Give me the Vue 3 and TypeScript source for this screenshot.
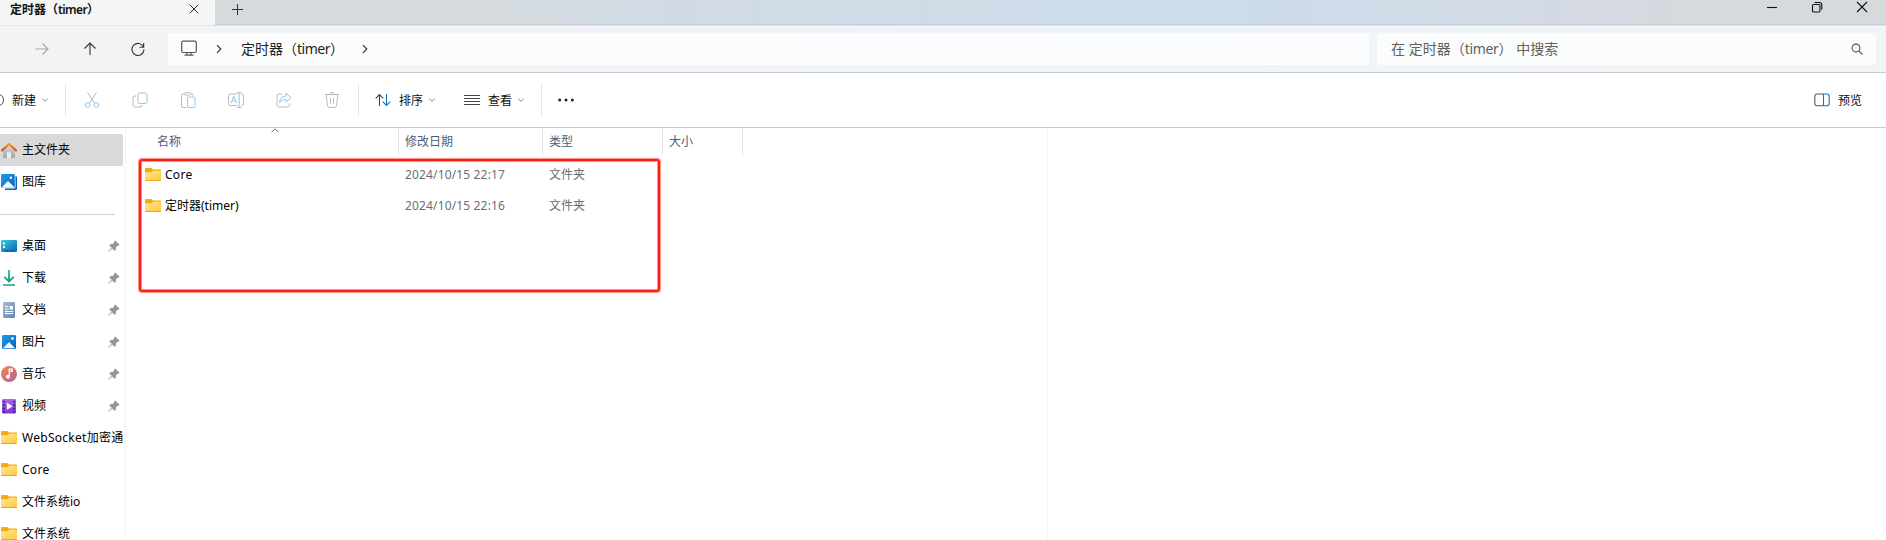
<script setup lang="ts">
type IconName = 'home' | 'gallery' | 'desktop' | 'download' | 'document' | 'picture' | 'music' | 'video' | 'folder'

interface Place {
  label: string
  icon: IconName
  pinned?: boolean
  active?: boolean
  latin?: boolean
}

interface Entry {
  name: string
  modified: string
  kind: string
}

const topPlaces: Place[] = [
  { label: '主文件夹', icon: 'home', active: true },
  { label: '图库', icon: 'gallery' },
]

const places: Place[] = [
  { label: '桌面', icon: 'desktop', pinned: true },
  { label: '下载', icon: 'download', pinned: true },
  { label: '文档', icon: 'document', pinned: true },
  { label: '图片', icon: 'picture', pinned: true },
  { label: '音乐', icon: 'music', pinned: true },
  { label: '视频', icon: 'video', pinned: true },
  { label: 'WebSocket加密通', icon: 'folder', latin: true },
  { label: 'Core', icon: 'folder', latin: true },
  { label: '文件系统io', icon: 'folder' },
  { label: '文件系统', icon: 'folder' },
]

const entries: Entry[] = [
  { name: 'Core', modified: '2024/10/15 22:17', kind: '文件夹' },
  { name: '定时器(timer)', modified: '2024/10/15 22:16', kind: '文件夹' },
]
</script>

<template>
  <div class="window">
    <svg class="defs" width="0" height="0" aria-hidden="true">
      <defs>
        <linearGradient id="gFolder" x1="0" y1="0" x2="1" y2="1"><stop offset="0" stop-color="#ffe69a" /><stop offset="1" stop-color="#ffc937" /></linearGradient>
        <linearGradient id="gBlue" x1="0" y1="0" x2="1" y2="1"><stop offset="0" stop-color="#1ba0ea" /><stop offset="1" stop-color="#0a62bd" /></linearGradient>
        <linearGradient id="gDesk" x1="0" y1="0" x2="1" y2="1"><stop offset="0" stop-color="#2fd0e0" /><stop offset="1" stop-color="#0c62b8" /></linearGradient>
        <linearGradient id="gDoc" x1="0" y1="0" x2="1" y2="1"><stop offset="0" stop-color="#a9bdd3" /><stop offset="1" stop-color="#6684a8" /></linearGradient>
        <linearGradient id="gMusic" x1="0" y1="0" x2="1" y2="1"><stop offset="0" stop-color="#f58b4c" /><stop offset="1" stop-color="#b45ba6" /></linearGradient>
        <linearGradient id="gVideo" x1="0" y1="0" x2="0" y2="1"><stop offset="0" stop-color="#a967ee" /><stop offset="1" stop-color="#7d35d6" /></linearGradient>
        <linearGradient id="gDown" gradientUnits="userSpaceOnUse" x1="0" y1="0" x2="0" y2="12"><stop offset="0" stop-color="#27c98a" /><stop offset="1" stop-color="#129a86" /></linearGradient>
        <linearGradient id="gRoof" x1="0" y1="0" x2="0" y2="1"><stop offset="0" stop-color="#f59b25" /><stop offset="1" stop-color="#d8501d" /></linearGradient>
        <linearGradient id="gWall" x1="0" y1="0" x2="0" y2="1"><stop offset="0" stop-color="#dedede" /><stop offset="1" stop-color="#a5a5a5" /></linearGradient>

        <symbol id="home" viewBox="0 0 16 16">
          <path d="M2 7.500 8 2.200l6 5.300V15a.9.9 0 0 1-.9.900H10V10.500H6v5.400H2.900A.9.9 0 0 1 2 15z" fill="url(#gWall)" />
          <path d="M6 10.500h4v5.400H6z" fill="#ededed" />
          <path d="M1 8.400 8 2l7 6.400" fill="none" stroke="url(#gRoof)" stroke-width="2.200" stroke-linecap="round" stroke-linejoin="round" />
        </symbol>
        <symbol id="gallery" viewBox="0 0 16 16">
          <path d="M4 2h10.500A1.500 1.500 0 0 1 16 3.500v11a1.500 1.500 0 0 1-1.500 1.500H4z" fill="#0d5fb4" />
          <rect x="0" y="0" width="14.500" height="14.500" rx="1.500" fill="#fff" />
          <rect x="0" y="0" width="13.800" height="13.800" rx="1.300" fill="url(#gBlue)" />
          <path d="M1 13 7 7l6.200 6-.5.8H1.500z" fill="#f2f8ff" />
          <circle cx="9.800" cy="3.700" r="1.200" fill="#fff" />
        </symbol>
        <symbol id="desktop" viewBox="0 0 16 16">
          <rect x="0" y="2" width="16" height="12" rx="1.200" fill="url(#gDesk)" />
          <path d="M2 4.500h2v2H2zM2 8h2v2H2z" fill="#e4fcff" />
          <path d="M3 12.800h10" stroke="#0a3a70" stroke-width="1" stroke-dasharray="1.500 1" />
        </symbol>
        <symbol id="download" viewBox="0 0 16 16">
          <path d="M8 0v11M3.300 6.800 8 11.500l4.700-4.700" fill="none" stroke="url(#gDown)" stroke-width="1.900" />
          <path d="M2 15h12" stroke="#16a085" stroke-width="1.600" />
        </symbol>
        <symbol id="document" viewBox="0 0 16 16">
          <rect x="2" y="0" width="12" height="16" rx="1.200" fill="url(#gDoc)" />
          <path d="M4 4.500h3.500M4 7h3.500M4 9.500h8M4 11.500h8" stroke="#fff" stroke-width="1.100" />
          <path d="M8.700 4h3.300v3.400H8.700z" fill="#fff" />
        </symbol>
        <symbol id="picture" viewBox="0 0 16 16">
          <rect x="1" y="1" width="14" height="14" rx="1.300" fill="url(#gBlue)" />
          <path d="M2 14.300 8 8l6 6.300z" fill="#f4faff" />
          <circle cx="11.500" cy="4.500" r="1.300" fill="#fff" />
        </symbol>
        <symbol id="music" viewBox="0 0 16 16">
          <circle cx="8" cy="8" r="8" fill="url(#gMusic)" />
          <path d="M8.300 10.500V3.200h2.900v2.200H9.300" fill="none" stroke="#fff" stroke-width="1.300" />
          <circle cx="7" cy="10.700" r="2" fill="#fff" />
        </symbol>
        <symbol id="video" viewBox="0 0 16 16">
          <rect x="1" y="1" width="14" height="14.500" rx="1.300" fill="url(#gVideo)" />
          <path d="M3 2.800v12M13 2.800v12" stroke="#3c176f" stroke-width="1.600" stroke-dasharray="1.600 1.900" />
          <path d="M5.800 4.500v7.600L11.600 8.300z" fill="#fff" />
        </symbol>
        <symbol id="folder" viewBox="0 0 16 16">
          <path d="M0 1.700A.7.700 0 0 1 .7 1h5.800l1.500 1.500h7.300a.7.700 0 0 1 .7.700V8H0z" fill="#f0ad10" />
          <path d="M0 5.200h6.300l1.500-1.400H16v9a.9.900 0 0 1-.9.900H.9a.9.900 0 0 1-.9-.9z" fill="url(#gFolder)" />
          <path d="M.4 13.500h15.200" stroke="#e5a31a" stroke-width=".9" />
        </symbol>
        <symbol id="pin" viewBox="0 0 12 12">
          <path d="M7.300.7 11.300 4.700 10.300 5.700 9.800 5.500 7.800 7.500 7.700 9.700 6.700 10.700 4.200 8.200 1 11.400.5 11.500.6 11 3.800 7.800 1.300 5.300 2.300 4.300 4.500 4.200 6.500 2.200 6.300 1.700z" fill="#8d989f" stroke="#8d989f" stroke-width=".3" />
        </symbol>
        <symbol id="chev" viewBox="0 0 8 8"><path d="M1.300 2.700 4 5.300 6.700 2.700" fill="none" stroke="#8c8c8c" stroke-width="1" /></symbol>
        <symbol id="crumb" viewBox="0 0 8 10"><path d="M2 1.200 5.800 5 2 8.800" fill="none" stroke="#333" stroke-width="1.200" /></symbol>
      </defs>
    </svg>

    <header class="titlebar">
      <div class="tab">
        <span class="tab-title">定时器（<span class="tight">timer</span>）</span>
        <svg class="tab-close" viewBox="0 0 10 10"><path d="M.7.7 9.300 9.300M9.300.7.7 9.300" /></svg>
      </div>
      <svg class="tab-add" viewBox="0 0 11 11"><path d="M5.500 0v11M0 5.500h11" /></svg>
      <div class="win-buttons">
        <svg viewBox="0 0 12 12"><path d="M1 6.500h10" /></svg>
        <svg viewBox="0 0 12 12"><rect x="1.500" y="3.500" width="7.500" height="7.500" rx="1.200" /><path d="M3.500 1.500h5A2.300 2.300 0 0 1 10.800 3.800v5" /></svg>
        <svg viewBox="0 0 12 12"><path d="M1 1l10 10M11 1 1 11" /></svg>
      </div>
    </header>

    <nav class="navbar">
      <div class="nav-buttons">
        <svg viewBox="0 0 14 14" class="dim"><path d="M.5 7h12.500M7.500 1.500 13 7l-5.500 5.500" /></svg>
        <svg viewBox="0 0 14 14"><path d="M7 13V1M1.500 6.500 7 1l5.500 5.500" /></svg>
        <svg viewBox="0 0 14 14"><path d="M12.500 5A6 6 0 1 0 13 7.500M12.700 1v4.200H8.500" /></svg>
      </div>
      <div class="address">
        <svg class="monitor" viewBox="0 0 16 16"><rect x=".7" y="1.200" width="14.600" height="11.300" rx="1.500" /><path d="M6 12.500v2.700M10 12.500v2.700M3.500 15.200h9" /></svg>
        <svg class="crumb first"><use href="#crumb" /></svg>
        <span class="path">定时器（<span class="tight">timer</span>）</span>
        <svg class="crumb"><use href="#crumb" /></svg>
      </div>
      <div class="search">
        <span>在 定时器（<span class="tight">timer</span>） 中搜索</span>
        <svg viewBox="0 0 12 12"><circle cx="5" cy="5" r="3.900" /><path d="M7.800 7.800 11.500 11.500" /></svg>
      </div>
    </nav>

    <div class="toolbar">
      <div class="new">
        <svg class="new-ring" viewBox="0 0 4 14"><path d="M0 1.500a6 6 0 0 1 0 11" /></svg>
        <span>新建</span>
        <svg class="chev"><use href="#chev" /></svg>
      </div>
      <i class="sep"></i>
      <div class="actions">
        <svg viewBox="0 0 16 16"><path class="g" d="M3.500.5 10.500 11.200M12.500.5 5.500 11.200" /><circle class="b" cx="3.600" cy="13" r="2.400" /><circle class="b" cx="12.400" cy="13" r="2.400" /></svg>
        <svg viewBox="0 0 16 16"><path class="g" d="M4 4H3a2 2 0 0 0-2 2v7a2 2 0 0 0 2 2h5a2 2 0 0 0 2-2" /><rect class="b" x="6" y="1" width="9" height="10.500" rx="1.800" /></svg>
        <svg viewBox="0 0 16 16"><path class="g" d="M4.500 2H3a1.500 1.500 0 0 0-1.500 1.500v10.500A1.500 1.500 0 0 0 3 15.500h3.500M10.500 2H12a1.200 1.200 0 0 1 1.200 1.500" /><rect class="g" x="4.500" y=".6" width="6" height="2.500" rx="1" /><rect class="b" x="7.500" y="5" width="7.500" height="10.500" rx="1.200" /></svg>
        <svg viewBox="0 0 16 16"><path class="g" d="M9.500 2H2.500a2 2 0 0 0-2 2v7.500a2 2 0 0 0 2 2h7M13 2h.5a2 2 0 0 1 2 2v7.500a2 2 0 0 1-2 2H13" /><path class="b" d="M9 .5h4.500M11.200.5v15M9 15.500h4.500M3 11.200 5.700 4.300 8.400 11.200M4 9h3.400" /></svg>
        <svg viewBox="0 0 16 16"><path class="g" d="M6 2H3a2 2 0 0 0-2 2v9a2 2 0 0 0 2 2h8.500a2 2 0 0 0 2-2v-1.500" /><path class="b" d="M10 1.200 15 5.700l-5 4.500V7.700C7 7.600 5 8.500 3.500 10.700 3.800 6.500 6 4.200 10 3.900z" /></svg>
        <svg viewBox="0 0 16 16"><path class="g" d="M1 2.500h14M6 2.300a2 2 0 0 1 4 0M2.300 2.700 3.500 13.600a2 2 0 0 0 2 1.900h5a2 2 0 0 0 2-1.900L13.700 2.700M6.500 6v5.800M9.500 6v5.800" /></svg>
      </div>
      <i class="sep"></i>
      <div class="menu sort">
        <svg class="menu-icon" viewBox="0 0 16 14"><path d="M4.500 13V1.500M.7 5.300 4.500 1.500l3.800 3.800" stroke="#444" /><path d="M11.500 1v11.500M7.700 8.700l3.800 3.800 3.800-3.800" stroke="#0078d4" /></svg>
        <span>排序</span>
        <svg class="chev"><use href="#chev" /></svg>
      </div>
      <div class="menu view">
        <svg class="menu-icon" viewBox="0 0 16 14"><path d="M0 2.500h16M0 5.500h16M0 8.500h16M0 11.500h16" stroke="#444" /></svg>
        <span>查看</span>
        <svg class="chev"><use href="#chev" /></svg>
      </div>
      <i class="sep"></i>
      <svg class="dots" viewBox="0 0 16 4"><circle cx="1.700" cy="2" r="1.500" /><circle cx="8" cy="2" r="1.500" /><circle cx="14.300" cy="2" r="1.500" /></svg>
      <div class="preview">
        <svg viewBox="0 0 16 14"><path d="M9 1H3a2.200 2.200 0 0 0-2.200 2.200v7.300A2.200 2.200 0 0 0 3 12.700h6" stroke="#555" /><path d="M9.500 1H13a2.200 2.200 0 0 1 2.200 2.200v7.300a2.200 2.200 0 0 1-2.200 2.200H9.500z" stroke="#0078d4" /></svg>
        <span>预览</span>
      </div>
    </div>

    <main class="body">
      <aside class="sidebar">
        <div v-for="p in topPlaces" :key="p.label" class="place" :class="{ active: p.active }">
          <svg class="icon"><use :href="'#' + p.icon" /></svg>
          <span class="label">{{ p.label }}</span>
        </div>
        <div class="divider"></div>
        <div v-for="p in places" :key="p.label" class="place">
          <svg class="icon"><use :href="'#' + p.icon" /></svg>
          <span class="label" :class="{ latin: p.latin }">{{ p.label }}</span>
          <svg v-if="p.pinned" class="pin"><use href="#pin" /></svg>
        </div>
      </aside>

      <section class="files">
        <div class="columns">
          <div class="col name">名称<svg class="sort-mark" viewBox="0 0 8 5"><path d="M.5 4.300 4 .8l3.500 3.500" /></svg></div>
          <div class="col date">修改日期</div>
          <div class="col type">类型</div>
          <div class="col size">大小</div>
        </div>
        <div v-for="e in entries" :key="e.name" class="entry">
          <svg class="icon"><use href="#folder" /></svg>
          <span class="entry-name">{{ e.name }}</span>
          <span class="entry-date">{{ e.modified }}</span>
          <span class="entry-kind">{{ e.kind }}</span>
        </div>
        <div class="marker"></div>
      </section>
      <section class="preview-pane"></section>
    </main>
  </div>
</template>

<style>
body { margin: 0; background: #fff; overflow: hidden; }
</style>

<style scoped>
.window {
  width: 1886px;
  height: 540px;
  overflow: hidden;
  display: flex;
  flex-direction: column;
  background: #fff;
  color: #111;
  font: 12px/16px "Noto Sans", "Noto Sans CJK SC", sans-serif;
}
.window * { box-sizing: border-box; }
.defs { position: absolute; }
svg { flex: none; display: block; }
span { white-space: nowrap; }

.titlebar {
  height: 25px;
  flex: none;
  display: flex;
  border-bottom: 1px solid #c4ced8;
  background: linear-gradient(90deg, #d5dadd 0, #d5dadc 440px, #d2dae4 640px, #cedce8 980px, #cbdceb 1180px, #d0dbe7 1420px, #d5d9e2 1610px, #d6dadc 1700px);
}
.tab {
  width: 215px;
  height: 25px;
  padding-left: 10px;
  display: flex;
  background: #f4f5f5;
}
.tab-title { width: 179px; padding-top: 2px; font-weight: 600; font-size: 12px; }
.tab-title .tight { letter-spacing: -.6px; }
.tab-close { width: 10px; height: 10px; margin-top: 4px; }
.tab-close path, .tab-add path { fill: none; stroke: #333; stroke-width: 1; }
.tab-add { width: 11px; height: 11px; margin: 4px 0 0 17px; }
.win-buttons { display: flex; gap: 33px; margin: 1px 18px 0 auto; }
.win-buttons svg { width: 12px; height: 12px; fill: none; stroke: #111; stroke-width: 1.100; }

.navbar {
  height: 48px;
  flex: none;
  display: flex;
  padding: 7px 10px 0 35px;
  border-top: 1px solid #e3e6e9;
  border-bottom: 1px solid #c3cad1;
  background: linear-gradient(90deg, #f2f3f4 0, #f2f3f6 600px, #eff4f9 1150px, #f1f3f7 1550px, #f2f3f4 1700px);
}
.nav-buttons { width: 133px; display: flex; gap: 34px; padding-top: 9px; }
.nav-buttons svg { width: 14px; height: 14px; fill: none; stroke: #333; stroke-width: 1.100; }
.nav-buttons .dim { stroke: #a5a5a5; }
.address, .search { height: 32px; border-radius: 4px; display: flex; background: #fbfdfd; }
.address { width: 1201px; padding-left: 13px; background: linear-gradient(90deg, #fbfdfc, #fbfcfe 800px); }
.address .tight { letter-spacing: -.5px; }
.monitor { width: 16px; height: 16px; margin-top: 7px; fill: none; stroke: #555; stroke-width: 1.200; }
.crumb { width: 8px; height: 10px; margin-top: 11px; }
.crumb.first { margin-left: 18px; }
.path { width: 106px; margin-left: 18px; font-size: 14px; line-height: 32px; color: #222; }
.path + .crumb { margin-left: 14px; }
.search { width: 499px; margin-left: 8px; padding: 0 13px 0 14px; justify-content: space-between; color: #606060; font-size: 14px; line-height: 32px; }
.search .tight { letter-spacing: -.3px; }
.search svg { width: 12px; height: 12px; margin-top: 10px; fill: none; stroke: #555; stroke-width: 1.100; }

.toolbar {
  height: 55px;
  flex: none;
  display: flex;
  align-items: center;
  border-bottom: 1px solid #c3cad1;
}
.toolbar span { padding-top: 2px; }
.new { width: 65px; display: flex; align-items: center; }
.new-ring { width: 4px; height: 14px; fill: none; stroke: #555; }
.new span { width: 25px; margin-left: 8px; }
.chev { width: 8px; height: 8px; }
.new .chev { margin-left: 4px; }
.sep { width: 1px; height: 32px; background: #e3e3e3; }
.actions { width: 292px; display: flex; gap: 32px; padding-left: 18px; }
.actions svg { width: 16px; height: 16px; fill: none; stroke-width: 1; }
.g { stroke: #bababa; }
.b { stroke: #92c6ee; }
.menu { display: flex; align-items: center; }
.menu-icon { width: 16px; height: 14px; fill: none; stroke-width: 1.100; }
.menu span { margin-left: 8px; width: 25px; }
.menu .chev { margin-left: 4px; }
.sort { width: 89px; padding-left: 16px; }
.view { width: 93px; padding-left: 16px; }
.dots { width: 16px; height: 4px; margin-left: 16px; fill: #222; }
.preview { display: flex; align-items: center; margin: 0 24px 0 auto; gap: 8px; }
.preview svg { width: 16px; height: 14px; fill: none; stroke-width: 1.100; }

.body { flex: 1; min-height: 0; display: flex; }
.sidebar { width: 126px; padding-top: 6px; border-right: 1px solid #f3f3f3; overflow: hidden; }
.place { width: 123px; height: 32px; display: flex; align-items: center; padding-left: 1px; overflow: hidden; color: #000; border-radius: 0 2px 2px 0; }
.place.active { background: #d9d9d9; }
.icon { width: 16px; height: 16px; }
.label { flex: none; margin-left: 5px; }
.latin { letter-spacing: .28px; }
.pin { width: 12px; height: 12px; margin: 0 3px 0 auto; }
.divider { width: 115px; height: 32px; background: linear-gradient(#d2d2d2, #d2d2d2) 0 15.500px / 100% 1px no-repeat; }
.files { position: relative; width: 922px; border-right: 1px solid #f3f3f3; }
.columns { display: flex; height: 31px; color: #4c607a; }
.col { height: 27px; line-height: 28px; border-right: 1px solid #e2e2e2; padding-left: 6px; display: flex; }
.name { width: 273px; padding-left: 31px; }
.date { width: 144px; }
.type { width: 120px; }
.size { width: 80px; }
.sort-mark { width: 8px; height: 5px; margin: 0 0 0 90px; fill: none; stroke: #666; }
.entry { display: flex; align-items: center; height: 31px; padding-left: 19px; color: #6d6d6d; }
.entry span { flex: none; }
.entry-name { width: 240px; margin-left: 4px; color: #000; }
.entry:nth-child(2) .entry-name { letter-spacing: .28px; }
.entry-date { width: 144px; letter-spacing: .15px; }
.marker { position: absolute; left: 13px; top: 31px; width: 521px; height: 133px; border: 2px solid #fb2114; border-radius: 3px; box-shadow: 0 0 0 1px #fb211480, inset 0 0 0 1px #fb211480; }
.preview-pane { flex: 1; }
</style>
